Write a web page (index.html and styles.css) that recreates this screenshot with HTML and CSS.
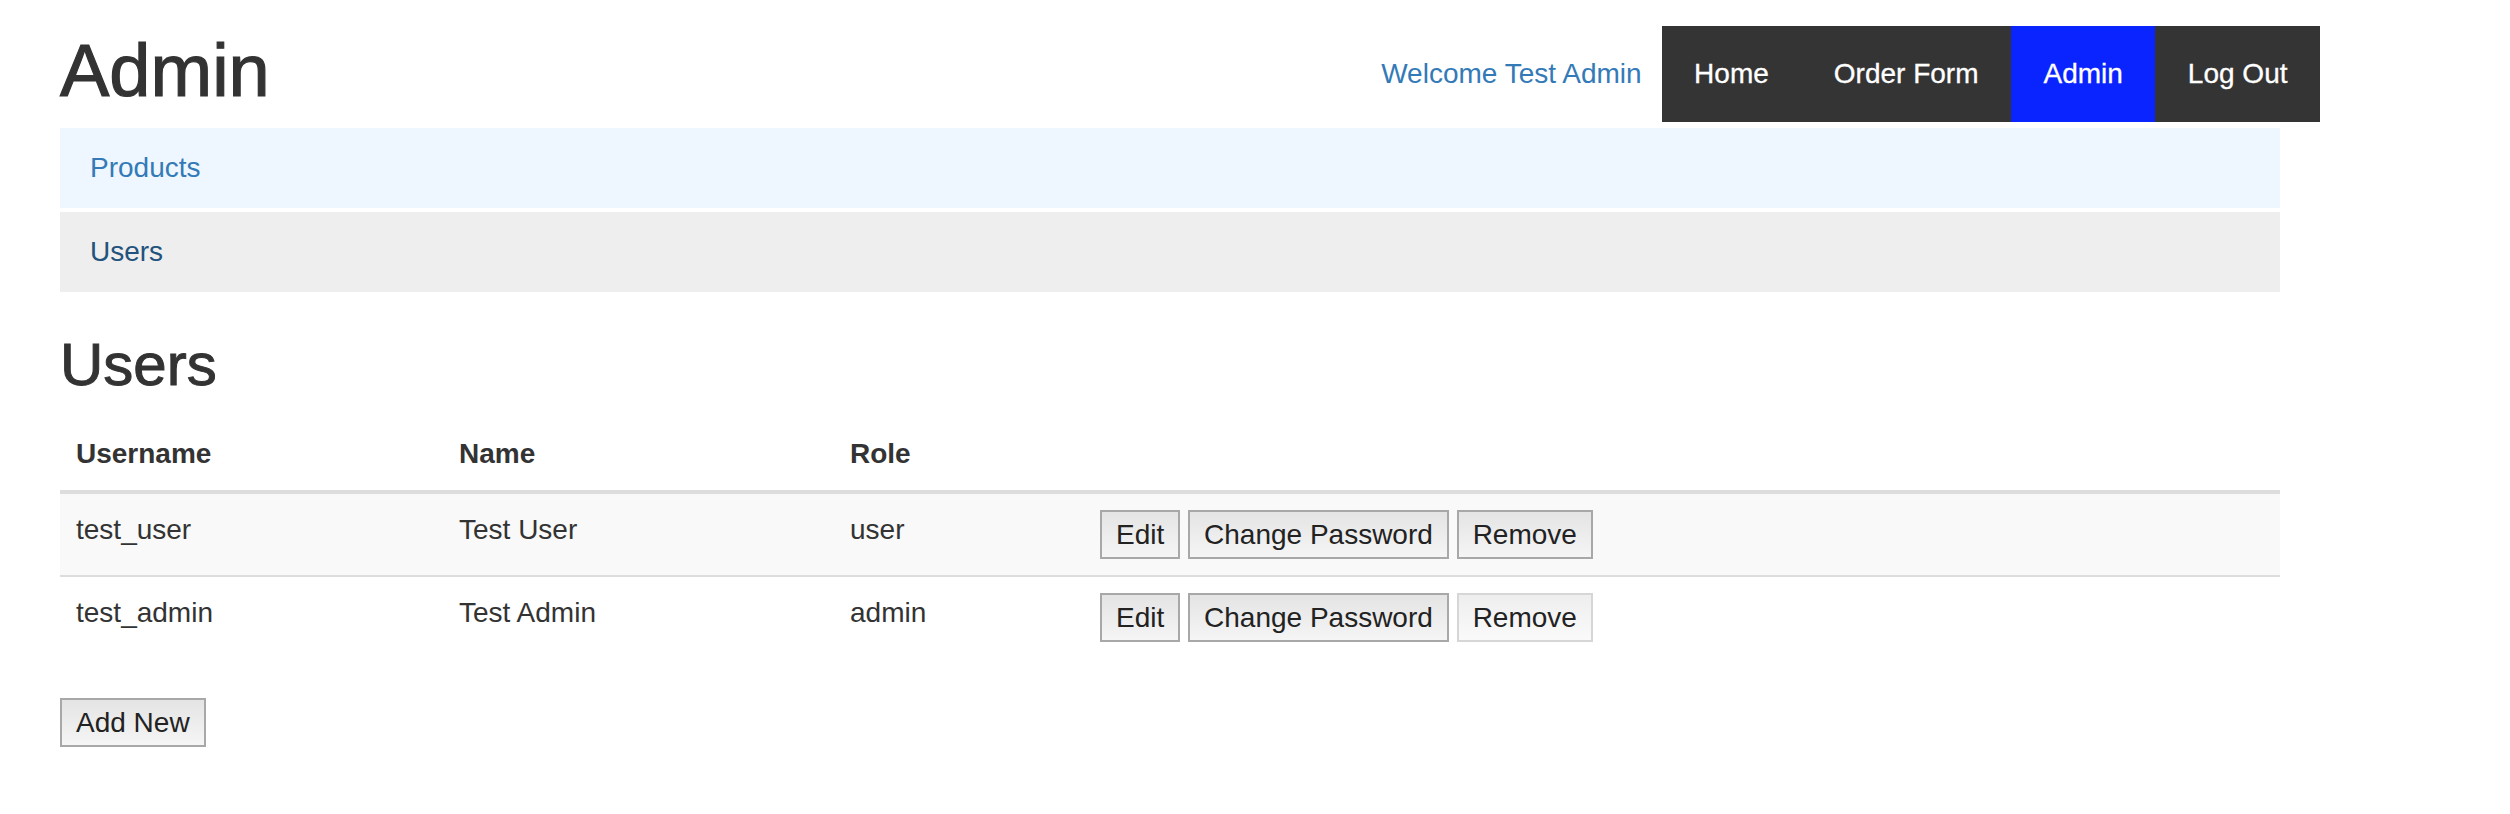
FILE: index.html
```html
<!DOCTYPE html>
<html lang="en">
<head>
<meta charset="utf-8">
<title>Admin</title>
<link rel="stylesheet" href="styles.css">
</head>
<body>
<div class="page">
  <header class="topbar">
    <h1 class="page-title">Admin</h1>
    <div class="top-right">
      <a class="welcome" href="#">Welcome Test Admin</a>
      <nav class="main-nav">
        <a class="nav-item" href="#">Home</a>
        <a class="nav-item" href="#">Order Form</a>
        <a class="nav-item active" href="#">Admin</a>
        <a class="nav-item" href="#">Log Out</a>
      </nav>
    </div>
  </header>
  <main class="content">
    <ul class="section-list">
      <li class="section-item products"><a href="#">Products</a></li>
      <li class="section-item current"><a href="#">Users</a></li>
    </ul>
    <h2 class="section-title">Users</h2>
    <table class="users-table">
      <thead>
        <tr>
          <th class="col-username">Username</th>
          <th class="col-name">Name</th>
          <th class="col-role">Role</th>
          <th class="col-actions"></th>
        </tr>
      </thead>
      <tbody>
        <tr class="striped">
          <td>test_user</td>
          <td>Test User</td>
          <td>user</td>
          <td><button class="btn">Edit</button> <button class="btn">Change Password</button> <button class="btn">Remove</button></td>
        </tr>
        <tr>
          <td>test_admin</td>
          <td>Test Admin</td>
          <td>admin</td>
          <td><button class="btn">Edit</button> <button class="btn">Change Password</button> <button class="btn btn-light">Remove</button></td>
        </tr>
      </tbody>
    </table>
    <button class="btn">Add New</button>
  </main>
</div>
</body>
</html>
```

FILE: styles.css
```css
html, body {
  margin: 0;
  padding: 0;
  background: #ffffff;
}

body {
  font-family: "Liberation Sans", Arial, Helvetica, sans-serif;
  font-size: 28px;
  line-height: 40px;
  color: #333333;
}

.page {
  padding: 26px 0 0 60px;
}

.topbar {
  width: 2260px;
  display: flex;
  justify-content: space-between;
  align-items: flex-start;
}

.page-title {
  margin: 5px 0 0 0;
  font-size: 74px;
  line-height: 80px;
  font-weight: 500;
  color: #333333;
  -webkit-text-stroke: 1.2px #333333;
}

.top-right {
  display: flex;
  align-items: center;
  gap: 20px;
}

.welcome {
  color: #337ab7;
  text-decoration: none;
  font-size: 28px;
}

.main-nav {
  display: flex;
  background: #343434;
  height: 96px;
}

.nav-item {
  display: flex;
  align-items: center;
  padding: 0 32.5px;
  color: #ffffff;
  text-decoration: none;
  font-size: 28px;
  -webkit-text-stroke: 0.3px #ffffff;
}

.nav-item.active {
  background: #0a24ff;
}

.content {
  width: 2220px;
  padding-top: 6px;
}

.section-list {
  list-style: none;
  margin: 0;
  padding: 0;
  display: flex;
  flex-direction: column;
  gap: 4px;
}

.section-item {
  height: 80px;
  display: flex;
  align-items: center;
  padding-left: 30px;
}

.section-item a {
  text-decoration: none;
}

.section-item.products {
  background: #eef6ff;
}

.section-item.products a {
  color: #337ab7;
}

.section-item.current {
  background: #eeeeee;
}

.section-item.current a {
  color: #23527c;
}

.section-title {
  margin: 40px 0 20px 0;
  font-size: 60px;
  line-height: 66px;
  font-weight: 500;
  color: #333333;
  -webkit-text-stroke: 1px #333333;
}

.users-table {
  width: 2220px;
  border-collapse: collapse;
  border-spacing: 0;
  margin-bottom: 40px;
}

.users-table th,
.users-table td {
  padding: 16px;
  text-align: left;
  vertical-align: top;
  line-height: 40px;
}

.users-table th {
  font-weight: bold;
  border-bottom: 4px solid #dddddd;
}

.users-table td {
  border-top: 2px solid #dddddd;
}

.col-username { width: 351px; }
.col-name { width: 359px; }
.col-role { width: 218px; }

.users-table tr.striped td {
  background: #f9f9f9;
}

.btn {
  font-family: "Liberation Sans", Arial, Helvetica, sans-serif;
  font-size: 28px;
  line-height: 33px;
  color: #222222;
  padding: 6px 14px;
  margin: 0;
  border: 2px solid #a8a8a8;
  border-radius: 0;
  background: linear-gradient(#e4e4e4, #f5f5f5);
}

.btn-light {
  border-color: #d6d6d6;
  background: linear-gradient(#eeeeee, #fafafa);
}
```
